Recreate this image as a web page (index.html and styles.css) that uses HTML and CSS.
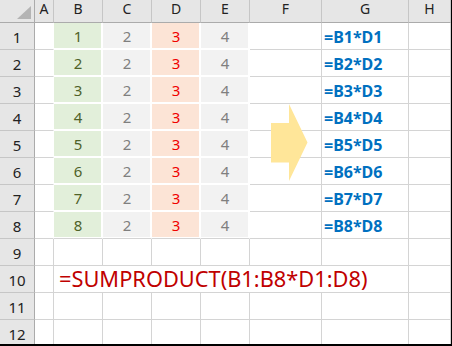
FILE: index.html
```html
<!DOCTYPE html>
<html>
<head>
<meta charset="utf-8">
<link rel="stylesheet" href="styles.css">
</head>
<body>
<div class="sheet">
  <div class="grid">
    <div class="corner"><svg class="tri" width="14" height="13" viewBox="0 0 14 13"><polygon points="14,0 14,13 0,13" fill="#b4b4b4"/></svg></div>
    <div class="ch">A</div><div class="ch">B</div><div class="ch">C</div><div class="ch">D</div><div class="ch">E</div><div class="ch">F</div><div class="ch">G</div><div class="ch">H</div>

    <div class="rh">1</div><div class="c a"></div><div class="c fb">1</div><div class="c fc">2</div><div class="c fd">3</div><div class="c fe">4</div><div class="c"></div><div class="c g">=B1*D1</div><div class="c"></div>
    <div class="rh">2</div><div class="c a"></div><div class="c fb">2</div><div class="c fc">2</div><div class="c fd">3</div><div class="c fe">4</div><div class="c"></div><div class="c g">=B2*D2</div><div class="c"></div>
    <div class="rh">3</div><div class="c a"></div><div class="c fb">3</div><div class="c fc">2</div><div class="c fd">3</div><div class="c fe">4</div><div class="c"></div><div class="c g">=B3*D3</div><div class="c"></div>
    <div class="rh">4</div><div class="c a"></div><div class="c fb">4</div><div class="c fc">2</div><div class="c fd">3</div><div class="c fe">4</div><div class="c"></div><div class="c g">=B4*D4</div><div class="c"></div>
    <div class="rh">5</div><div class="c a"></div><div class="c fb">5</div><div class="c fc">2</div><div class="c fd">3</div><div class="c fe">4</div><div class="c"></div><div class="c g">=B5*D5</div><div class="c"></div>
    <div class="rh">6</div><div class="c a"></div><div class="c fb">6</div><div class="c fc">2</div><div class="c fd">3</div><div class="c fe">4</div><div class="c"></div><div class="c g">=B6*D6</div><div class="c"></div>
    <div class="rh">7</div><div class="c a"></div><div class="c fb">7</div><div class="c fc">2</div><div class="c fd">3</div><div class="c fe">4</div><div class="c"></div><div class="c g">=B7*D7</div><div class="c"></div>
    <div class="rh">8</div><div class="c a"></div><div class="c fb last">8</div><div class="c fc last">2</div><div class="c fd last">3</div><div class="c fe last">4</div><div class="c"></div><div class="c g">=B8*D8</div><div class="c"></div>

    <div class="rh">9</div><div class="c"></div><div class="c"></div><div class="c"></div><div class="c"></div><div class="c"></div><div class="c"></div><div class="c"></div><div class="c"></div>
    <div class="rh">10</div><div class="c"></div><div class="c formula">=SUMPRODUCT(B1:B8*D1:D8)</div><div class="c"></div>
    <div class="rh">11</div><div class="c"></div><div class="c"></div><div class="c"></div><div class="c"></div><div class="c"></div><div class="c"></div><div class="c"></div><div class="c"></div>
    <div class="rh">12</div><div class="c"></div><div class="c"></div><div class="c"></div><div class="c"></div><div class="c"></div><div class="c"></div><div class="c"></div><div class="c"></div>
  </div>
  <svg class="arrow" width="452" height="346" viewBox="0 0 452 346">
    <polygon points="271,123 289,123 289,104 307.5,142.5 289,181 289,162.5 271,162.5" fill="#ffe699"/>
  </svg>
</div>
</body>
</html>
```

FILE: styles.css
```css
html, body {
  margin: 0;
  padding: 0;
  background: #fff;
}

.sheet {
  position: relative;
  width: 452px;
  height: 346px;
  box-sizing: border-box;
  border-right: 1px solid #000;
  border-bottom: 2px solid #000;
  overflow: hidden;
  font-family: "Noto Sans", "Noto Sans CJK TC", sans-serif;
}

.grid {
  display: grid;
  grid-template-columns: 35px 19px 49px 49px 49px 49px 72px 87px 42px;
  grid-template-rows: 23px repeat(12, 27px);
}

.grid > div {
  box-sizing: border-box;
}

.corner {
  background: #e6e6e6;
  border-right: 1px solid #ababab;
  border-bottom: 1px solid #ababab;
  display: flex;
  justify-content: flex-end;
  align-items: flex-end;
  padding: 0 3px 3px 0;
}

.tri {
  display: block;
}

.ch {
  background: #e6e6e6;
  border-right: 1px solid #c6c6c6;
  border-bottom: 1px solid #ababab;
  display: flex;
  justify-content: center;
  align-items: flex-start;
  font-size: 14px;
  line-height: 18px;
  color: #222;
}

.rh {
  background: #e6e6e6;
  border-right: 1px solid #ababab;
  border-bottom: 1px solid #c6c6c6;
  display: flex;
  justify-content: center;
  align-items: flex-end;
  padding-bottom: 2px;
  font-size: 15px;
  line-height: 20px;
  color: #222;
}

.c {
  border-right: 1px solid #d4d4d4;
  border-bottom: 1px solid #d4d4d4;
  display: flex;
  align-items: center;
  justify-content: center;
  font-size: 15px;
  line-height: 20px;
  white-space: nowrap;
}

.c.a {
  border-right-color: #fff;
}

.fb, .fc, .fd, .fe {
  border-right-color: #fff;
  border-bottom-color: #fff;
  box-shadow: inset -1px -1px 0 #fff;
}

.fb.last, .fc.last, .fd.last, .fe.last {
  border-bottom-color: #d4d4d4;
}

.fb { background: #e2efda; color: #4f6228; }
.fc { background: #f2f2f2; color: #7f7f7f; }
.fd { background: #fce4d6; color: #f00000; }
.fe { background: #f2f2f2; color: #7f7f7f; }

.g {
  justify-content: flex-start;
  padding: 2px 0 0 2px;
  font-size: 16px;
  font-weight: bold;
  color: #0070c0;
}

.formula {
  grid-column: span 6;
  justify-content: flex-start;
  padding-left: 5px;
  font-size: 21.8px;
  color: #c00000;
}

.arrow {
  position: absolute;
  left: 0;
  top: 0;
  pointer-events: none;
}
```
